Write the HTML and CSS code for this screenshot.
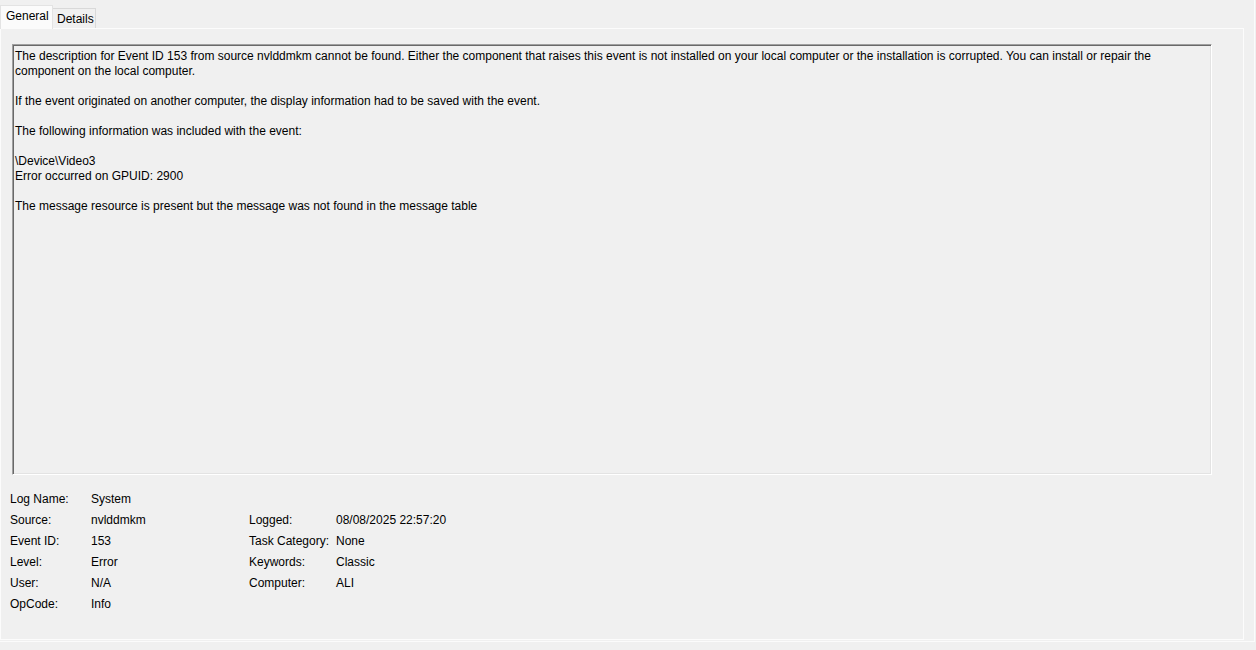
FILE: index.html
```html
<!DOCTYPE html>
<html>
<head>
<meta charset="utf-8">
<link rel="stylesheet" href="styles.css">
</head>
<body>
<div class="window">
  <div class="tabs">
    <div class="tab active">General</div>
    <div class="tab">Details</div>
  </div>
  <div class="panel">
    <div class="desc">
      <p>The description for Event ID 153 from source nvlddmkm cannot be found. Either the component that raises this event is not installed on your local computer or the installation is corrupted. You can install or repair the<br>component on the local computer.</p>
      <p>If the event originated on another computer, the display information had to be saved with the event.</p>
      <p>The following information was included with the event:</p>
      <p>\Device\Video3<br>Error occurred on GPUID: 2900</p>
      <p>The message resource is present but the message was not found in the message table</p>
    </div>
    <div class="info">
      <div class="lbl">Log Name:</div><div class="val">System</div><div class="lbl2"></div><div class="val2"></div>
      <div class="lbl">Source:</div><div class="val">nvlddmkm</div><div class="lbl2">Logged:</div><div class="val2">08/08/2025 22:57:20</div>
      <div class="lbl">Event ID:</div><div class="val">153</div><div class="lbl2">Task Category:</div><div class="val2">None</div>
      <div class="lbl">Level:</div><div class="val">Error</div><div class="lbl2">Keywords:</div><div class="val2">Classic</div>
      <div class="lbl">User:</div><div class="val">N/A</div><div class="lbl2">Computer:</div><div class="val2">ALI</div>
      <div class="lbl">OpCode:</div><div class="val">Info</div><div class="lbl2"></div><div class="val2"></div>
    </div>
  </div>
</div>
</body>
</html>
```

FILE: styles.css
```css
html, body {
  margin: 0;
  padding: 0;
  background: #f0f0f0;
}
body {
  font-family: "Segoe UI", "Liberation Sans", Arial, sans-serif;
  font-size: 12px;
  color: #000;
  width: 1256px;
  height: 650px;
  overflow: hidden;
}
.window {
  width: 1254px;
  height: 641px;
  border-right: 1px solid #fbfbfb;
  border-bottom: 1px solid #fbfbfb;
}
.tabs {
  display: flex;
  align-items: flex-end;
  height: 28px;
  position: relative;
  z-index: 1;
}
.tab {
  box-sizing: border-box;
  height: 20px;
  width: 44px;
  border: 1px solid #d9d9d9;
  border-bottom: none;
  background: #f0f0f0;
  padding: 3px 0 0 4px;
  line-height: 14px;
  margin-left: -1px;
}
.tab.active {
  width: 53px;
  height: 24px;
  margin-left: 0;
  margin-bottom: -1px;
  background: #fbfbfb;
  border-color: #e3e3e3;
  padding: 3px 0 0 5px;
  position: relative;
  z-index: 2;
}
.panel {
  box-sizing: border-box;
  width: 1244px;
  height: 612px;
  border: 1px solid #fcfcfc;
  padding: 15px 0 0 11px;
}
.desc {
  box-sizing: border-box;
  width: 1200px;
  height: 431px;
  border: 1px solid;
  border-color: #a0a0a0 #ffffff #ffffff #a0a0a0;
  box-shadow: inset 1px 1px 0 #696969, inset -1px -1px 0 #e3e3e3;
  padding: 4px 2px;
  line-height: 15px;
  white-space: nowrap;
}
.desc p {
  margin: 0 0 15px 0;
}
.info {
  display: grid;
  grid-template-columns: 81px 158px 87px auto;
  grid-auto-rows: 21px;
  margin: 14px 0 0 -2px;
  line-height: 21px;
}
```
